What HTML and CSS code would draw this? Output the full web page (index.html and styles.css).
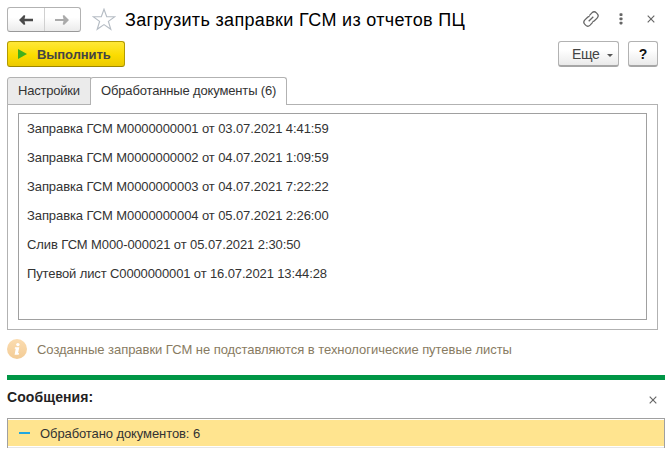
FILE: index.html
```html
<!DOCTYPE html>
<html lang="ru">
<head>
<meta charset="utf-8">
<title>Загрузить заправки ГСМ из отчетов ПЦ</title>
<link rel="stylesheet" href="styles.css">
</head>
<body>
<main class="window">
  <header class="titlebar">
    <div class="nav">
      <button class="nav-btn" aria-label="Назад"><svg width="14" height="10" viewBox="0 0 14 10"><path d="M0 5 5 0 6.3 .8 5.5 3.7H14V6.3H5.5L6.3 9.2 5 10Z" fill="#4a4a4a"/></svg></button>
      <button class="nav-btn" aria-label="Вперед"><svg width="14" height="10" viewBox="0 0 14 10"><path d="M14 5 9 0 7.7 .8 8.5 3.9H0V6.1H8.5L7.7 9.2 9 10Z" fill="#aaa"/></svg></button>
    </div>
    <svg class="star" width="24" height="23" viewBox="0 0 24 23"><path d="M12 1.2 14.7 8.7H22.8L16.4 13.4 18.8 21.3 12 16.6 5.2 21.3 7.6 13.4 1.2 8.7H9.3Z" fill="none" stroke="#b5bcc4" stroke-width="1.15"/></svg>
    <h1 class="title">Загрузить заправки ГСМ из отчетов ПЦ</h1>
    <div class="tools">
      <svg class="link" width="16" height="16" viewBox="0 0 16 16" fill="none" stroke="#666" stroke-width="1.3"><path d="M6.3 4.6 8.9 1.9a3.2 3.2 0 0 1 4.5 0l.7.7a3.2 3.2 0 0 1 0 4.5L11.4 9.8a3.2 3.2 0 0 1-2 .8M9.7 11.4 7.1 14.1a3.2 3.2 0 0 1-4.5 0l-.7-.7a3.2 3.2 0 0 1 0-4.5L4.6 6.2a3.2 3.2 0 0 1 2-.8M5.7 10.3 10.3 5.7"/></svg>
      <svg class="dots" width="4" height="12" viewBox="0 0 4 12" fill="#666"><rect x=".5" y=".3" width="3" height="2.7" rx=".8"/><rect x=".5" y="4.5" width="3" height="2.7" rx=".8"/><rect x=".5" y="8.7" width="3" height="2.7" rx=".8"/></svg>
      <svg class="close" width="8" height="8" viewBox="0 0 8 8"><path d="M.7.7 7.3 7.3M7.3.7.7 7.3" stroke="#666" stroke-width="1.15"/></svg>
    </div>
  </header>
  <div class="commands">
    <button class="btn run"><svg width="9" height="10" viewBox="0 0 9 10"><path d="M0 0 9 5 0 10Z" fill="#42b01c"/></svg><span class="run-text">Выполнить</span></button>
    <button class="btn more"><span class="more-text">Еще</span><svg class="caret" width="6" height="3" viewBox="0 0 6 3"><path d="M0 0H6L3 3Z" fill="#555"/></svg></button>
    <button class="btn help">?</button>
  </div>
  <nav class="tabs">
    <div class="tab"><span class="t-settings">Настройки</span></div>
    <div class="tab active"><span class="t-docs">Обработанные документы (6)</span></div>
  </nav>
  <section class="panel">
    <ul class="list">
      <li>Заправка ГСМ М0000000001 от 03.07.2021 4:41:59</li>
      <li>Заправка ГСМ М0000000002 от 04.07.2021 1:09:59</li>
      <li>Заправка ГСМ М0000000003 от 04.07.2021 7:22:22</li>
      <li>Заправка ГСМ М0000000004 от 05.07.2021 2:26:00</li>
      <li>Слив ГСМ М000-000021 от 05.07.2021 2:30:50</li>
      <li class="waybill">Путевой лист С0000000001 от 16.07.2021 13:44:28</li>
    </ul>
  </section>
  <div class="hint">
    <svg width="20" height="20" viewBox="0 0 20 20"><defs><linearGradient id="g" x1="0" y1="0" x2="0" y2="1"><stop offset="0" stop-color="#fbdcb0"/><stop offset="1" stop-color="#f3cc96"/></linearGradient></defs><circle cx="10" cy="10" r="10" fill="url(#g)"/><circle cx="10.9" cy="5.6" r="1.7" fill="#fff"/><path d="M8 8.2H12.3L11.1 14H12L11.7 15.7H7.6L8.7 9.8H7.7Z" fill="#fff"/></svg>
    <span class="hint-text">Созданные заправки ГСМ не подставляются в технологические путевые листы</span>
  </div>
  <section class="messages">
    <div class="messages-head">
      <h2>Сообщения:</h2>
      <svg width="8" height="8" viewBox="0 0 8 8"><path d="M.7.7 7.3 7.3M7.3.7.7 7.3" stroke="#666" stroke-width="1.15"/></svg>
    </div>
    <div class="messages-box">
      <div class="message"><i class="dash"></i><span class="message-text">Обработано документов: 6</span></div>
    </div>
  </section>
</main>
</body>
</html>
```
FILE: styles.css
```css
* { box-sizing: border-box; }
body {
  margin: 0;
  background: #fff;
  color: #333;
  font: 13px/15px "Liberation Sans", Arial, sans-serif;
}
.window { width: 672px; height: 451px; padding: 7px 7px 0; overflow: hidden; }
svg { display: block; flex: none; }
span, h1, h2, li { white-space: nowrap; }
button { font: inherit; color: inherit; padding: 0; }

.titlebar { display: flex; align-items: center; height: 25px; }
.nav {
  display: flex;
  width: 74px;
  height: 25px;
  border: 1px solid #b2b2b2;
  border-bottom-color: #999;
  border-radius: 3px;
  background: linear-gradient(#fff 40%, #ebebeb);
}
.nav-btn { flex: 1; display: flex; align-items: center; justify-content: center; border: 0; background: none; }
.nav-btn + .nav-btn { border-left: 1px solid #d0d0d0; }
.star { margin-left: 11px; }
.title { margin: 0 0 0 9px; color: #000; font-size: 18px; line-height: 24px; font-weight: 400; letter-spacing: .33px; }
.tools { display: flex; align-items: center; margin-left: auto; margin-right: 10px; }
.link { margin-top: -2px; }
.dots { margin-left: 20px; margin-top: -2px; }
.close { margin-left: 24px; margin-top: -2px; }

.commands { display: flex; margin-top: 9px; padding-right: 7px; }
.btn {
  display: flex;
  align-items: center;
  height: 26px;
  border: 1px solid #b2b2b2;
  border-bottom: 2px solid #a6a6a6;
  border-radius: 3px;
  background: linear-gradient(#fff 35%, #eaeaea);
}
.run {
  width: 118px;
  padding-left: 10px;
  gap: 10px;
  border: 1px solid #b39b00;
  border-bottom-color: #9c8700;
  background: linear-gradient(#ffe838, #fbdc00 55%, #ecca00);
  color: #444;
  font-weight: 700;
}
.run-text { letter-spacing: -.08px; }
.more { width: 61px; margin-left: auto; padding: 1px 0 0 13px; gap: 7px; color: #444; font-size: 14px; }
.more-text { letter-spacing: -.3px; }
.caret { margin-top: 2px; }
.help { width: 30px; margin-left: 9px; padding-top: 1px; justify-content: center; color: #111; font-size: 14px; font-weight: 700; }

.tabs { display: flex; height: 28px; margin-top: 10px; }
.tab {
  height: 28px;
  width: 84px;
  padding: 5px 0 0 10px;
  border: 1px solid #b2b2b2;
  border-radius: 3px 0 0 0;
  background: #ebebeb;
}
.t-settings { letter-spacing: -.22px; }
.t-docs { letter-spacing: -.15px; }
.tab.active {
  width: 197px;
  margin-left: -1px;
  border-bottom: 0;
  border-radius: 3px 3px 0 0;
  background: #fff;
  position: relative;
}
.panel { width: 651px; height: 226px; margin-top: -1px; padding: 8px 10px 9px; border: 1px solid #b2b2b2; }
.list {
  height: 207px;
  margin: 0;
  padding: 0 0 0 8px;
  border: 1px solid #a0a0a0;
  list-style: none;
}
.list li { height: 29px; line-height: 29px; letter-spacing: -.09px; }
.list .waybill { letter-spacing: -.125px; }

.hint { display: flex; align-items: center; height: 20px; margin-top: 9px; gap: 10px; color: #887b62; }
.hint-text { letter-spacing: -.045px; }
.messages { width: 658px; margin-top: 16px; border-top: 5px solid #009646; }
.messages-head { display: flex; justify-content: space-between; align-items: center; height: 38px; padding: 0 8px 0 0; }
.messages-head h2 { margin: 0 0 3px; font-size: 14px; line-height: 15px; color: #222; letter-spacing: .1px; }
.messages-head svg { margin-top: 1px; }
.messages-box { height: 30px; padding-top: 1px; border: 1px solid #a0a0a0; border-bottom: 0; }
.message {
  display: flex;
  align-items: center;
  height: 26px;
  padding-left: 11px;
  gap: 10px;
  background: #ffe48f;
  box-shadow: 0 1px #fff, 0 2px #e6e6e6;
}
.message-text { letter-spacing: -.09px; }
.dash { width: 11px; height: 2px; background: #22a7e0; }
```
